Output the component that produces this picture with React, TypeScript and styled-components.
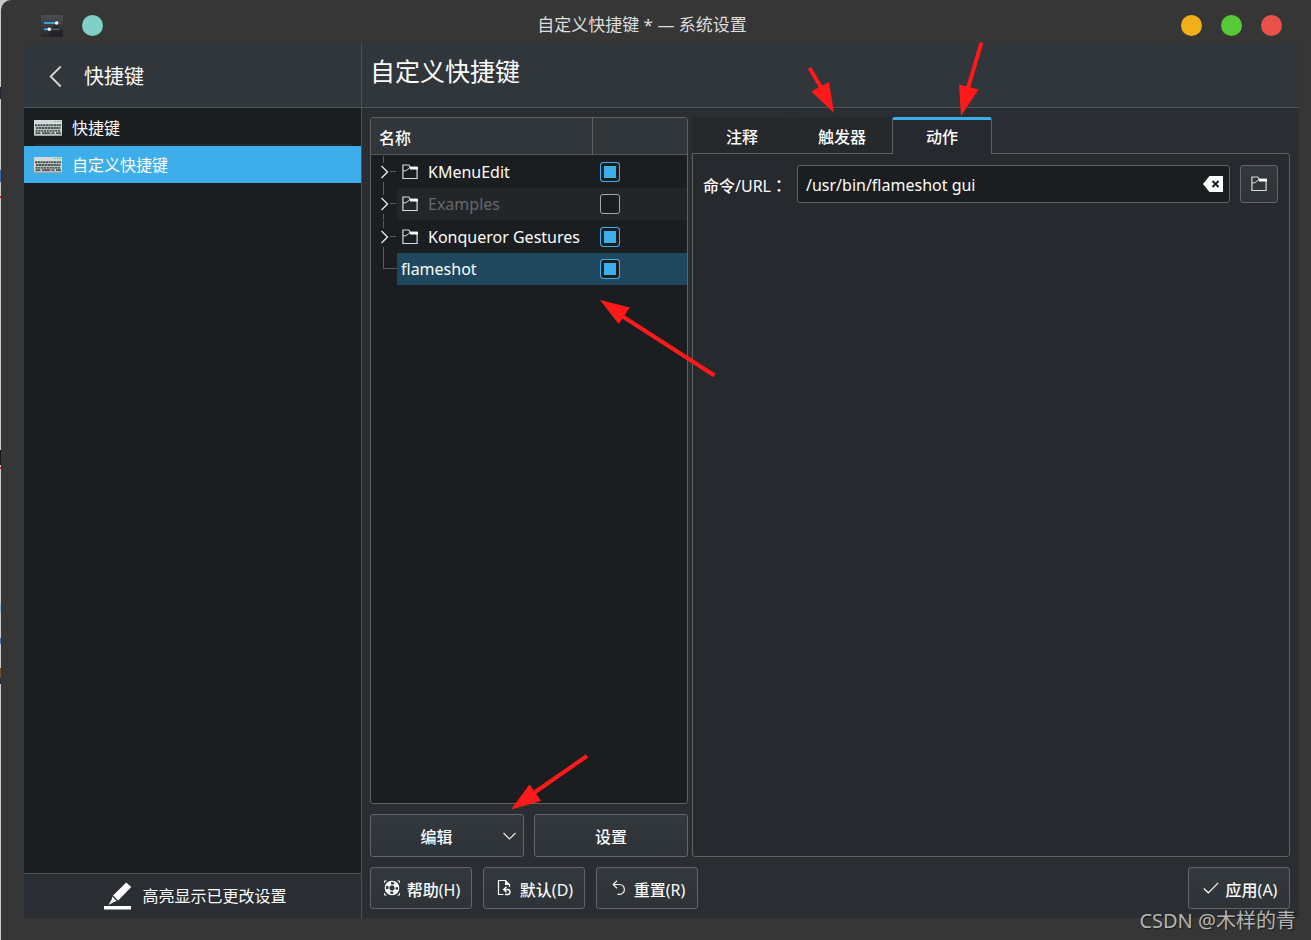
import React, { useState } from "react";
import styled, { createGlobalStyle } from "styled-components";

const GlobalStyle = createGlobalStyle`
  * { box-sizing: border-box; }
  body {
    margin: 0;
    background: #c9caca;
    color: #fcfcfc;
    font: 16px/24px "Noto Sans", "Noto Sans CJK SC", sans-serif;
  }
  button, input { font: inherit; color: inherit; }
`;

const Desktop = styled.div`
  position: relative;
  display: flex;
  min-height: 100vh;
  background: #c9caca;
`;

const Backdrop = styled.div`
  width: 1px;
  background: linear-gradient(
    #c9caca 87px, #1d2733 87px 99px, #c9caca 99px 170px, #3465a4 170px 182px,
    #c9caca 182px 196px, #c81e1e 196px 198px, #c9caca 198px 450px, #15181c 450px 465px,
    #c9caca 465px 467px, #e01b1b 467px 469px, #c9caca 469px 604px, #7fb8d4 604px 612px,
    #c9caca 612px 638px, #4a78b5 638px 644px, #c9caca 644px 668px, #7a4a2c 668px 678px,
    #1f2a44 678px 684px, #c9caca 684px
  );
`;

const Window = styled.div`
  flex: 1;
  min-width: 0;
  display: flex;
  flex-direction: column;
  background: #363636;
  border-top-left-radius: 10px;
`;

const TitleBar = styled.header`
  display: flex;
  align-items: center;
  justify-content: space-between;
  height: 43px;
  padding: 8px 29px 0 40px;
`;

const TitleGroup = styled.div`
  display: flex;
  align-items: center;
  gap: 19px;
`;

const WindowTitle = styled.span`
  padding-bottom: 2px;
  font-size: 17px;
  color: #dedede;
`;

const Dot = styled.button<{ $color: string }>`
  width: 21px;
  height: 21px;
  padding: 0;
  border: 0;
  border-radius: 50%;
  background: ${(p) => p.$color};
`;

const Body = styled.div`
  flex: 1;
  display: grid;
  grid-template-columns: 338px minmax(0, 1fr);
  margin: 0 12px 22px 23px;
  background: #2a2e32;
`;

const Sidebar = styled.nav`
  display: flex;
  flex-direction: column;
  border-right: 1px solid #4a5356;
  background: #1b1e20;
`;

const SidebarHeader = styled.div`
  display: flex;
  align-items: center;
  gap: 21px;
  height: 65px;
  padding: 3px 24px 0;
  border-bottom: 1px solid #4a5759;
  background: #31363b;
  font-size: 20px;
`;

const BackButton = styled.button`
  display: flex;
  padding: 0;
  border: 0;
  background: none;
`;

const ModuleLink = styled.a<{ $active?: boolean }>`
  display: flex;
  align-items: center;
  gap: 10px;
  height: ${(p) => (p.$active ? 37 : 36)}px;
  padding: ${(p) => (p.$active ? 0 : 3)}px 10px 0;
  color: #fcfcfc;
  text-decoration: none;
  background: ${(p) => (p.$active ? "#3daee9" : "transparent")};
`;

const Separator = styled.div`
  height: 2px;
  margin: 0 9px 0 10px;
  background: #25282b;
`;

const SidebarFooter = styled.button`
  display: flex;
  align-items: center;
  justify-content: center;
  gap: 10px;
  height: 45px;
  margin-top: auto;
  padding: 0 0 0 6px;
  border: 0;
  border-top: 1px solid #4a5759;
  background: #2a2e32;
`;

const Main = styled.main`
  display: flex;
  flex-direction: column;
`;

const PageHeader = styled.div`
  height: 65px;
  padding: 10px 8px;
  border-bottom: 1px solid #4a5759;
  background: #31363b;
`;

const PageTitle = styled.h1`
  margin: 0;
  font-size: 25px;
  line-height: 36px;
  font-weight: 400;
`;

const Content = styled.div`
  flex: 1;
  display: flex;
  flex-direction: column;
  gap: 10px;
  padding: 9px 9px 9px 8px;
`;

const Columns = styled.div`
  flex: 1;
  display: grid;
  grid-template-columns: 318px minmax(0, 1fr);
  gap: 4px;
`;

const TreeColumn = styled.section`
  display: flex;
  flex-direction: column;
  gap: 10px;
`;

const TreeFrame = styled.div`
  flex: 1;
  border: 1px solid #5e6265;
  border-radius: 3px;
  background: #1b1e20;
  overflow: hidden;
`;

const Tree = styled.table`
  width: 100%;
  border-collapse: separate;
  border-spacing: 0;
  table-layout: fixed;
`;

const HeadCell = styled.th`
  height: 37px;
  padding: 3px 8px 0;
  border-bottom: 1px solid #54585c;
  background: #31363b;
  text-align: left;
  font-weight: 500;

  & + & { border-left: 1px solid #5e6265; }
`;

const Row = styled.tr<{ $tone: "plain" | "alternate" | "selected" }>`
  height: 33px;

  td { padding: 0; line-height: 24px; }
  &:nth-child(even) { height: 32px; }
  td:not(:first-child) {
    background: ${(p) =>
      ({ plain: "transparent", alternate: "#232629", selected: "#1f485e" })[p.$tone]};
  }
  svg { display: block; }
`;

const NameLabel = styled.label<{ $dim?: boolean; $leaf?: boolean }>`
  display: flex;
  align-items: center;
  gap: 10px;
  padding-left: ${(p) => (p.$leaf ? 4 : 5)}px;
  color: ${(p) => (p.$dim ? "#65686b" : "#fcfcfc")};
  white-space: nowrap;
`;

const CheckBox = styled.input`
  appearance: none;
  display: block;
  width: 20px;
  height: 20px;
  margin: 0 0 0 8px;
  border: 1px solid #a5a7a8;
  border-radius: 3px;
  background: #1b1e20;

  &:checked {
    border-color: #3daee9;
    background: #3daee9;
    box-shadow: inset 0 0 0 3px #1b1e20;
  }
`;

const ButtonRow = styled.div`
  display: grid;
  grid-template-columns: 1fr 1fr;
  gap: 10px;
`;

const PushButton = styled.button`
  display: flex;
  align-items: center;
  justify-content: center;
  gap: 7px;
  height: 42px;
  padding: 0;
  border: 1px solid #62666a;
  border-radius: 3px;
  background: linear-gradient(#33383c, #2e3338);
  white-space: nowrap;
`;

const ButtonText = styled.span`
  padding-top: 3px;
`;

const WideButton = styled(PushButton)`
  height: 43px;
  padding-top: 2px;
  font-weight: 500;
`;

const MenuButton = styled(WideButton)`
  gap: 0;
  padding-right: 6px;
`;

const MenuLabel = styled.span`
  flex: 1;
`;

const Cjk = styled.span`
  font-weight: 500;
`;

const FullWidthColon = styled.span`
  font-family: "Noto Sans CJK TC", sans-serif;
  font-weight: 500;
`;

const DetailColumn = styled.section`
  display: flex;
  flex-direction: column;
`;

const TabList = styled.div`
  display: flex;
  height: 37px;
  margin-bottom: -1px;
`;

const Tab = styled.button<{ $active: boolean }>`
  z-index: 1;
  width: 100px;
  height: ${(p) => (p.$active ? 37 : 36)}px;
  padding: ${(p) => (p.$active ? 0 : 3)}px 0 0;
  border: ${(p) => (p.$active ? "1px solid #5e6265" : "0")};
  border-top: ${(p) => (p.$active ? "3px solid #3daee9" : "0")};
  border-bottom: 0;
  border-radius: 3px 3px 0 0;
  background: ${(p) => (p.$active ? "#26292e" : "#25292c")};
  font-weight: 500;
`;

const TabPanel = styled.div`
  flex: 1;
  padding: 11px 11px 11px 10px;
  border: 1px solid #5e6265;
  border-radius: 0 3px 3px 3px;
  background: #26292e;
`;

const FieldRow = styled.div`
  display: flex;
  align-items: center;
  gap: 10px;
`;

const FieldLabel = styled.label`
  width: 84px;
  padding-top: 2px;
  white-space: nowrap;
`;

const TextField = styled.div`
  flex: 1;
  display: flex;
  align-items: center;
  height: 38px;
  padding: 0 6px 0 8px;
  border: 1px solid #5e6265;
  border-radius: 3px;
  background: #1b1e20;
`;

const TextInput = styled.input`
  flex: 1;
  min-width: 0;
  padding: 2px 0 0;
  border: 0;
  outline: 0;
  background: none;
`;

const BrowseButton = styled(PushButton)`
  width: 38px;
  height: 38px;
`;

const ActionBar = styled.footer`
  display: flex;
  gap: 11px;

  button { width: 102px; padding-left: 2px; }
  button:last-child { margin-left: auto; }
`;

const Watermark = styled.div`
  position: absolute;
  right: 15px;
  bottom: 4px;
  font-size: 20px;
  line-height: 30px;
  color: #b4b5b6;
  text-shadow: 1px 1px 1px #1c1c1c;
`;

const Annotations = styled.svg`
  position: absolute;
  top: 0;
  left: 0;
  z-index: 2;
  pointer-events: none;
`;

const AppIcon = () => (
  <svg width="22" height="22" viewBox="0 0 22 22">
    <defs>
      <linearGradient id="app" x1="0" y1="0" x2="0" y2="1">
        <stop offset="0" stopColor="#4a4d52" />
        <stop offset="1" stopColor="#26282b" />
      </linearGradient>
    </defs>
    <rect width="22" height="22" rx="1" fill="url(#app)" />
    <path d="M16 9 22 15V22H12L6 15Z" fill="#1f2124" opacity=".7" />
    <path d="M3 8h13M3 14.3h4" stroke="#3d9fd6" strokeWidth="2" />
    <path d="M16 8h3M9 14.3h10" stroke="#4c5054" strokeWidth="2" />
    <circle cx="15.7" cy="8" r="1.7" fill="#fff" />
    <circle cx="8.3" cy="14.3" r="1.7" fill="#fff" />
  </svg>
);

const BackIcon = () => (
  <svg width="15" height="22" viewBox="0 0 15 22">
    <path d="M12.7 .5 2.700 10.500l10 10" fill="none" stroke="#d6d8d9" strokeWidth="1.8" />
  </svg>
);

const KeyboardIcon = () => (
  <svg width="28" height="16" viewBox="0 0 28 16">
    <rect width="28" height="16" fill="#d3d9d8" />
    <rect y="14.5" width="28" height="1.5" fill="#9ea6a4" />
    <path d="M20 1.5h7" stroke="#7fc79c" strokeWidth="1" strokeDasharray="2 .6" />
    <path d="M1 5.3h26" stroke="#45524f" strokeWidth="2" strokeDasharray="2.2 .5" />
    <path d="M2 8h24.5" stroke="#45524f" strokeWidth="2" strokeDasharray="2.4 .5" />
    <path d="M1.5 10.7h25" stroke="#4e5a57" strokeWidth="1.9" strokeDasharray="2.2 .6" />
    <path d="M1.5 13.2h5M8 13.2h8.500M17.500 13.2h3M22 13.2h5" stroke="#4e5a57" strokeWidth="1.7" />
  </svg>
);

const HighlighterIcon = () => (
  <svg width="28" height="28" viewBox="0 0 28 28" fill="#fff">
    <path d="M0 24h27v3.500H0zM22.200.5l5 4.600-13 13.500-5.200-5.200zM8.200 14.600l4.500 4.400-2.700 1-5.500 3L8 16.800z" />
  </svg>
);

const FolderIcon = () => (
  <svg width="16" height="16" viewBox="0 0 16 16">
    <path d="M.9 14.500V1h5.800l1.600 2.200h6.800v11.300z" fill="none" stroke="#d9dbdb" strokeWidth="1.200" />
    <path d="M7.500 3H16v2.500H8z" fill="#fcfcfc" />
    <path d="M1 6.800h3L7.800 3.500" fill="none" stroke="#d9dbdb" />
  </svg>
);

const ClearIcon = () => (
  <svg width="20" height="16" viewBox="0 0 20 16">
    <path d="M0 8 6.500 0H20v16H6.500z" fill="#fcfcfc" />
    <path d="m9.500 5 6 6m0-6-6 6" stroke="#1b1e20" strokeWidth="2" />
  </svg>
);

const ChevronDownIcon = () => (
  <svg width="15" height="9" viewBox="0 0 15 9">
    <path d="m1.500 1 6 6 6-6" fill="none" stroke="#e6e7e7" strokeWidth="1.200" />
  </svg>
);

const HelpIcon = () => (
  <svg width="16" height="16" viewBox="0 0 16 16" fill="none" stroke="#fcfcfc">
    <circle cx="8" cy="8" r="6.700" strokeWidth="1.200" />
    <circle cx="8" cy="8" r="3.200" />
    <circle cx="8" cy="8" r="5" strokeWidth="3.800" strokeDasharray="4.600 3.254" strokeDashoffset="-1.627" />
    <path d="M.5 2.800V.900h2M13.500.900h2v1.900M15.500 13.200v1.900h-2M2.500 15.100h-2v-1.900" />
  </svg>
);

const DefaultsIcon = () => (
  <svg width="16" height="16" viewBox="0 0 16 16" fill="none" stroke="#fcfcfc">
    <path d="M6.500 14.500h-5V.5h7l4 4v2.500" strokeWidth="1.200" />
    <path d="M8 .5v4.500h5z" fill="#fcfcfc" stroke="none" />
    <path d="M7 9.500h3.500a2.500 2.500 0 0 1 0 5H8M9.500 6.700 6.700 9.500l2.800 2.800" strokeWidth="1.400" />
  </svg>
);

const ResetIcon = () => (
  <svg width="16" height="16" viewBox="0 0 16 16" fill="none" stroke="#f0f0f0" strokeWidth="1.200">
    <path d="M6 .8 2.200 4.500 6 8.200M2.200 4.500h6.300a4.900 4.900 0 0 1 0 9.800H6.500" />
  </svg>
);

const ApplyIcon = () => (
  <svg width="16" height="16" viewBox="0 0 16 16">
    <path d="m.8 8.500 4.500 4.300L15.200 2.800" fill="none" stroke="#fcfcfc" strokeWidth="1.200" />
  </svg>
);

const Branch = ({ leaf }: { leaf?: boolean }) => (
  <svg width="26" height="32" viewBox="0 0 26 32" fill="none">
    {leaf ? (
      <path d="M12.500 0v15.500H26" stroke="#5b5e60" />
    ) : (
      <>
        <path d="M12.500 0v7M12.500 26v6M19 15.500h6" stroke="#5b5e60" />
        <path d="m10.500 10 6 6-6 6" stroke="#e4e5e5" strokeWidth="1.400" />
      </>
    )}
  </svg>
);

type Item = { name: string; on: boolean; tone: "plain" | "alternate" | "selected"; leaf?: boolean };

const initialItems: Item[] = [
  { name: "KMenuEdit", on: true, tone: "plain" },
  { name: "Examples", on: false, tone: "alternate" },
  { name: "Konqueror Gestures", on: true, tone: "plain" },
  { name: "flameshot", on: true, tone: "selected", leaf: true },
];

const tabs = ["注释", "触发器", "动作"];

/* A straight red arrow: a shaft and a triangular head. */
const Arrow = ({ shaft, head }: { shaft: string; head: string }) => (
  <>
    <path d={shaft} stroke="#ff1919" strokeWidth="4" />
    <path d={head} fill="#ff1919" />
  </>
);

export default function App() {
  const [items, setItems] = useState(initialItems);
  const [tab, setTab] = useState(2);
  const [command, setCommand] = useState("/usr/bin/flameshot gui");

  const toggle = (index: number) =>
    setItems(items.map((item, i) => (i === index ? { ...item, on: !item.on } : item)));

  return (
    <Desktop>
      <GlobalStyle />
      <Backdrop />
      <Window>
        <TitleBar>
          <TitleGroup>
            <AppIcon />
            <Dot $color="#7fd1c7" aria-label="置顶" />
          </TitleGroup>
          <WindowTitle>自定义快捷键 * — 系统设置</WindowTitle>
          <TitleGroup>
            <Dot $color="#f2ae1b" aria-label="最小化" />
            <Dot $color="#57c936" aria-label="最大化" />
            <Dot $color="#ea514a" aria-label="关闭" />
          </TitleGroup>
        </TitleBar>

        <Body>
          <Sidebar>
            <SidebarHeader>
              <BackButton aria-label="返回"><BackIcon /></BackButton>
              快捷键
            </SidebarHeader>
            <ModuleLink href="#shortcuts"><KeyboardIcon />快捷键</ModuleLink>
            <Separator />
            <ModuleLink href="#custom" $active><KeyboardIcon />自定义快捷键</ModuleLink>
            <SidebarFooter><HighlighterIcon />高亮显示已更改设置</SidebarFooter>
          </Sidebar>

          <Main>
            <PageHeader><PageTitle>自定义快捷键</PageTitle></PageHeader>
            <Content>
              <Columns>
                <TreeColumn>
                  <TreeFrame>
                    <Tree>
                      <colgroup>
                        <col style={{ width: 26 }} />
                        <col style={{ width: 195 }} />
                        <col />
                      </colgroup>
                      <thead>
                        <tr>
                          <HeadCell colSpan={2}>名称</HeadCell>
                          <HeadCell />
                        </tr>
                      </thead>
                      <tbody>
                        {items.map((item, i) => (
                          <Row key={item.name} $tone={item.tone}>
                            <td><Branch leaf={item.leaf} /></td>
                            <td>
                              <NameLabel htmlFor={`item-${i}`} $leaf={item.leaf} $dim={!item.on}>
                                {!item.leaf && <FolderIcon />}
                                {item.name}
                              </NameLabel>
                            </td>
                            <td>
                              <CheckBox
                                id={`item-${i}`}
                                type="checkbox"
                                checked={item.on}
                                onChange={() => toggle(i)}
                              />
                            </td>
                          </Row>
                        ))}
                      </tbody>
                    </Tree>
                  </TreeFrame>
                  <ButtonRow>
                    <MenuButton><MenuLabel>编辑</MenuLabel><ChevronDownIcon /></MenuButton>
                    <WideButton>设置</WideButton>
                  </ButtonRow>
                </TreeColumn>

                <DetailColumn>
                  <TabList role="tablist">
                    {tabs.map((name, i) => (
                      <Tab key={name} role="tab" aria-selected={tab === i} $active={tab === i} onClick={() => setTab(i)}>
                        {name}
                      </Tab>
                    ))}
                  </TabList>
                  <TabPanel role="tabpanel">
                    <FieldRow>
                      <FieldLabel htmlFor="command">
                        <Cjk>命令</Cjk>/URL<FullWidthColon>：</FullWidthColon>
                      </FieldLabel>
                      <TextField>
                        <TextInput id="command" value={command} onChange={(e) => setCommand(e.target.value)} />
                        <BackButton aria-label="清除" onClick={() => setCommand("")}><ClearIcon /></BackButton>
                      </TextField>
                      <BrowseButton aria-label="浏览"><FolderIcon /></BrowseButton>
                    </FieldRow>
                  </TabPanel>
                </DetailColumn>
              </Columns>

              <ActionBar>
                <PushButton><HelpIcon /><ButtonText><Cjk>帮助</Cjk>(H)</ButtonText></PushButton>
                <PushButton><DefaultsIcon /><ButtonText><Cjk>默认</Cjk>(D)</ButtonText></PushButton>
                <PushButton><ResetIcon /><ButtonText><Cjk>重置</Cjk>(R)</ButtonText></PushButton>
                <PushButton><ApplyIcon /><ButtonText><Cjk>应用</Cjk>(A)</ButtonText></PushButton>
              </ActionBar>
            </Content>
          </Main>
        </Body>
      </Window>

      <Watermark>CSDN @木样的青</Watermark>
      <Annotations width="1311" height="940" viewBox="0 0 1311 940">
        <Arrow shaft="M809.500 68 822 89" head="M834 113 811.300 91.500 829 82z" />
        <Arrow shaft="M981.500 42.500 968 88" head="M961 116 959 84.500 978.500 89.500z" />
        <Arrow shaft="M714.500 375.500 622 316" head="M600 300 629.700 307.500 618.700 324z" />
        <Arrow shaft="M587 756 533 793.500" head="M511 809.500 529.500 784.500 541 801z" />
      </Annotations>
    </Desktop>
  );
}
